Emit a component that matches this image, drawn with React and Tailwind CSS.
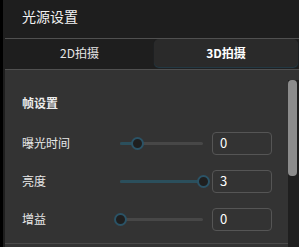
const rows = [
  { label: "曝光时间", value: "0", pct: 20 },
  { label: "亮度", value: "3", pct: 100 },
  { label: "增益", value: "0", pct: 0 },
];

function Slider({ pct }) {
  return (
    <div className="relative h-[13px] w-[95px] shrink-0">
      <div className="absolute left-[6px] right-[6px] top-[5px] h-[3px] rounded-full bg-[#474747]">
        <div className="h-full rounded-full bg-[#2b4f5c]" style={{ width: `${pct}%` }} />
      </div>
      <div
        className="absolute top-0 h-[13px] w-[13px] rounded-full border-2 border-[#2b5366] bg-[#1f1f1f]"
        style={{ left: `${(pct / 100) * 83}px` }}
      />
    </div>
  );
}

export default function App() {
  return (
    <div
      className="flex h-[247px] w-[299px] overflow-hidden bg-[#1e1e1e]"
      style={{ fontFamily: '"Noto Sans CJK SC", "Noto Sans", sans-serif' }}
    >
      <div className="w-[3px] shrink-0 bg-black" />
      <div className="flex min-w-0 flex-1 flex-col pl-[2px]">
        <div className="flex h-[38px] items-center pb-[6px] pl-[17px] text-[14px] leading-none text-[#f2f2f2]">
          光源设置
        </div>
        <div className="h-px bg-[#505050]" />
        <div className="flex h-[30px] items-start">
          <div className="flex h-[28px] flex-1 items-center justify-center text-[12px] text-[#e6e6e6]">
            2D拍摄
          </div>
          <div className="mr-px flex h-[28px] w-[144px] items-center justify-center rounded-[5px] bg-[#2a2a2a] text-[12px] font-bold text-white shadow-[0_1px_1px_rgba(40,80,100,0.6)]">
            3D拍摄
          </div>
        </div>
        <div className="h-px bg-[#505050]" />
        <div className="flex flex-1 bg-[#333333]">
          <div className="mb-[3px] flex min-w-0 flex-1 flex-col border-b border-[#4a4a4a] pl-[17px]">
            <div className="mt-[24px] h-[18px] text-[12px] font-bold leading-[18px] text-[#ececec]">帧设置</div>
            <div className="mt-[12px] flex flex-col">
              {rows.map((r) => (
                <div key={r.label} className="flex h-[38px] items-center">
                  <div className="w-[92px] shrink-0 text-[12px] text-[#e8e8e8]">{r.label}</div>
                  <Slider pct={r.pct} />
                  <div className="ml-[3px] flex h-[23px] w-[60px] items-center rounded-[4px] border border-[#555555] px-[7px] text-[13px] text-white">
                    {r.value}
                  </div>
                </div>
              ))}
            </div>
          </div>
          <div className="flex w-[11px] shrink-0 flex-col pt-[10px]">
            <div className="flex-1 bg-[#1f1f1f]">
              <div className="h-[96px] w-[9px] rounded-[4px] bg-[#8c8c8c]" />
            </div>
          </div>
        </div>
      </div>
    </div>
  );
}
